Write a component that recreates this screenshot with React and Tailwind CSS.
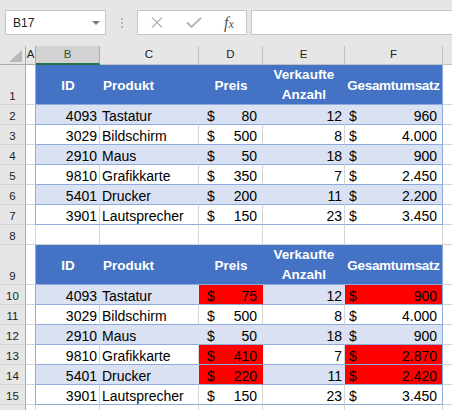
import React from 'react';

const T1 = [
  ['4093', 'Tastatur', '80', '12', '960'],
  ['3029', 'Bildschirm', '500', '8', '4.000'],
  ['2910', 'Maus', '50', '18', '900'],
  ['9810', 'Grafikkarte', '350', '7', '2.450'],
  ['5401', 'Drucker', '200', '11', '2.200'],
  ['3901', 'Lautsprecher', '150', '23', '3.450'],
];

const T2 = [
  ['4093', 'Tastatur', '75', '12', '900', true],
  ['3029', 'Bildschirm', '500', '8', '4.000'],
  ['2910', 'Maus', '50', '18', '900'],
  ['9810', 'Grafikkarte', '410', '7', '2.870', true],
  ['5401', 'Drucker', '220', '11', '2.420', true],
  ['3901', 'Lautsprecher', '150', '23', '3.450'],
];

const RowNum = ({ n, tall }) => (
  <div
    className={
      'w-[26px] shrink-0 bg-[#e6e6e6] border-r border-b border-r-[#ababab] border-b-[#d4d4d4] flex items-end justify-center pb-[1px] text-[11.5px] leading-[14px] text-[#222]' +
      (tall ? ' h-[40px]' : ' h-[20px]')
    }
  >
    {n}
  </div>
);

const ColA = ({ table }) => (
  <div
    className={
      'w-[10px] shrink-0 h-full bg-white border-r border-b border-b-[#d4d4d4]' +
      (table ? ' border-r-[#8ea9db]' : ' border-r-[#d4d4d4]')
    }
  />
);

const Rest = () => <div className="flex-1 h-full bg-white border-b border-b-[#d4d4d4]" />;

const HeaderRow = ({ n }) => (
  <div className="flex h-[40px]">
    <RowNum n={n} tall />
    <ColA table />
    <div className="flex h-full bg-[#4472c4] border-b border-b-[#8ea9db] text-white font-bold text-[13.5px] leading-[20px]">
      <div className="w-[64px] flex items-center justify-center pt-[2px]">ID</div>
      <div className="w-[99px] flex items-center pl-[3px] pt-[2px]">Produkt</div>
      <div className="w-[64px] flex items-center justify-center pt-[2px]">Preis</div>
      <div className="w-[82px] flex flex-col items-center justify-center">
        <span>Verkaufte</span>
        <span>Anzahl</span>
      </div>
      <div className="w-[98px] flex items-center justify-center pt-[2px] border-r border-r-[#8ea9db] tracking-[-0.3px]">Gesamtumsatz</div>
    </div>
    <Rest />
  </div>
);

const DataRow = ({ n, row, band }) => {
  const [id, prod, preis, anz, ges, red] = row;
  const fill = band ? 'bg-[#d9e1f2] border-r-[#d9e1f2]' : 'bg-white border-r-[#d4d4d4]';
  const base = 'h-full flex items-end leading-[15px] border-r border-b border-b-[#8ea9db] ';
  return (
    <div className="flex h-[20px]">
      <RowNum n={n} />
      <ColA table />
      <div className="flex h-full text-[14px] text-black">
        <div className={base + fill + ' w-[64px] justify-end pr-[2px]'}>{id}</div>
        <div className={base + fill + ' w-[99px] pl-[2px]'}>{prod}</div>
        <div
          className={
            base +
            (red ? 'bg-[#ff0000] border-r-[#ff0000]' : fill) +
            ' w-[64px] justify-between pl-[8px] pr-[5px]'
          }
        >
          <span>$</span>
          <span>{preis}</span>
        </div>
        <div className={base + fill + ' w-[82px] justify-end pr-[2px]'}>{anz}</div>
        <div
          className={
            base +
            (red ? 'bg-[#ff0000]' : band ? 'bg-[#d9e1f2]' : 'bg-white') +
            ' border-r-[#8ea9db] w-[98px] justify-between pl-[4px] pr-[5px]'
          }
        >
          <span>$</span>
          <span>{ges}</span>
        </div>
      </div>
      <Rest />
    </div>
  );
};

const EmptyRow = ({ n }) => (
  <div className="flex h-[20px]">
    <RowNum n={n} />
    <ColA />
    <div className="w-[64px] h-full bg-white border-r border-b border-[#d4d4d4]" />
    <div className="w-[99px] h-full bg-white border-r border-b border-[#d4d4d4]" />
    <div className="w-[64px] h-full bg-white border-r border-b border-[#d4d4d4]" />
    <div className="w-[82px] h-full bg-white border-r border-b border-[#d4d4d4]" />
    <div className="w-[98px] h-full bg-white border-r border-b border-[#d4d4d4]" />
    <Rest />
  </div>
);

export default function App() {
  return (
    <div className="w-[452px] h-[410px] overflow-hidden bg-white font-['Liberation_Sans',Arial,sans-serif]">
      {/* formula bar */}
      <div className="h-[46px] bg-[#e6e6e6] flex items-start pt-[10px] pl-[5px]">
        <div className="w-[101px] h-[25px] bg-white border border-[#c6c6c6] flex items-center justify-between pl-[7px] pr-[5px]">
          <span className="text-[12px] text-[#222]">B17</span>
          <span className="w-0 h-0 border-l-[4px] border-r-[4px] border-t-[4px] border-l-transparent border-r-transparent border-t-[#7a7a7a]" />
        </div>
        <div className="w-[31px] h-[25px] flex flex-col items-center justify-center gap-[2px]">
          <span className="w-[2px] h-[2px] bg-[#b5b5b5]" />
          <span className="w-[2px] h-[2px] bg-[#b5b5b5]" />
          <span className="w-[2px] h-[2px] bg-[#b5b5b5]" />
        </div>
        <div className="w-[110px] h-[25px] bg-white border border-[#c6c6c6] flex items-center pl-[13px]">
          <svg width="12" height="11" viewBox="0 0 12 11">
            <path d="M1 0.5 L11 10.5 M11 0.5 L1 10.5" stroke="#b3b3b3" strokeWidth="1.3" fill="none" />
          </svg>
          <svg className="ml-[23px]" width="16" height="11" viewBox="0 0 16 11">
            <path d="M1 5.5 L5.5 10 L15 0.8" stroke="#b3b3b3" strokeWidth="1.8" fill="none" />
          </svg>
          <span className="ml-[22px] font-['Liberation_Serif',serif] italic text-[#555] text-[16px] leading-none">
            f<span className="text-[12px]">x</span>
          </span>
        </div>
        <div className="ml-[4px] flex-1 h-[25px] bg-white border border-r-0 border-[#c6c6c6]" />
      </div>

      {/* column headers */}
      <div className="flex h-[19px] bg-[#e6e6e6] text-[11.5px] text-[#222]">
        <div className="w-[26px] h-full border-r border-b border-[#ababab] flex items-end justify-end pr-[3px] pb-[2px]">
          <svg width="13" height="12" viewBox="0 0 13 12">
            <polygon points="13,0 13,12 0,12" fill="#b9b9b9" />
          </svg>
        </div>
        <div className="w-[10px] h-full border-r border-b border-[#ababab] flex items-center justify-center">A</div>
        <div className="w-[64px] h-full bg-[#d2d2d2] border-r border-r-[#ababab] border-b-2 border-b-[#217346] flex items-center justify-center text-[#1d5b38] pt-[1px]">B</div>
        <div className="w-[99px] h-full border-r border-b border-[#c0c0c0] flex items-center justify-center">C</div>
        <div className="w-[64px] h-full border-r border-b border-[#c0c0c0] flex items-center justify-center">D</div>
        <div className="w-[82px] h-full border-r border-b border-[#c0c0c0] flex items-center justify-center">E</div>
        <div className="w-[98px] h-full border-r border-b border-[#c0c0c0] flex items-center justify-center">F</div>
        <div className="flex-1 h-full border-b border-[#c0c0c0]" />
      </div>

      <HeaderRow n={1} />
      {T1.map((r, i) => (
        <DataRow key={'a' + i} n={i + 2} row={r} band={i % 2 === 0} />
      ))}
      <EmptyRow n={8} />
      <HeaderRow n={9} />
      {T2.map((r, i) => (
        <DataRow key={'b' + i} n={i + 10} row={r} band={i % 2 === 0} />
      ))}
      <EmptyRow n="" />
    </div>
  );
}
